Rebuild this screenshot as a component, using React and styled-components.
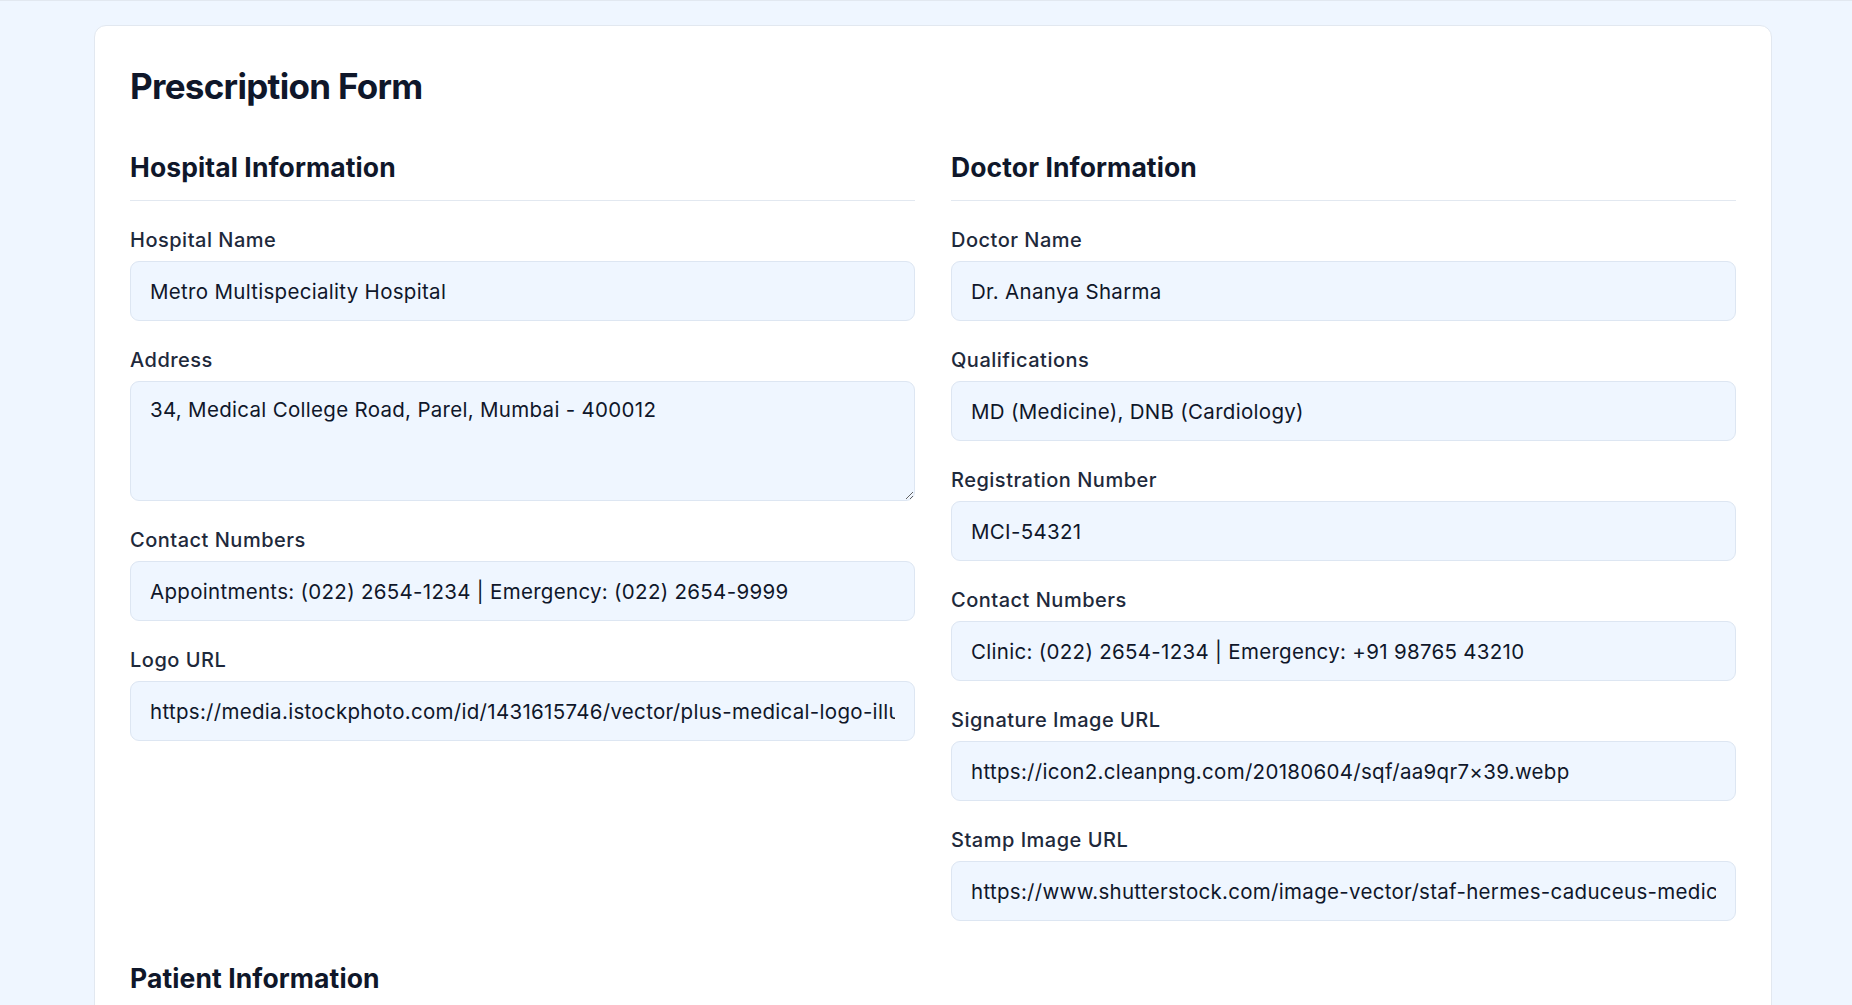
import React from "react";
import styled, { createGlobalStyle } from "styled-components";

const GlobalStyle = createGlobalStyle`
  * {
    box-sizing: border-box;
  }
  body {
    margin: 0;
    background-color: #eff6ff;
    font-family: Inter, "Noto Sans", sans-serif;
    color: #0f172a;
  }
`;

const Page = styled.div`
  border-top: 1px solid #e2e8f0;
  padding: 24px 80px 60px 94px;
  min-height: 100vh;
`;

const Card = styled.div`
  width: 1678px;
  background-color: #fff;
  border: 1px solid #e2e8f0;
  border-radius: 12px;
  padding: 40px 35px 40px;
`;

const Title = styled.h1`
  margin: 0 0 45px;
  font-size: 35px;
  line-height: 40px;
  font-weight: 700;
  letter-spacing: -0.7px;
`;

const Grid = styled.div`
  display: grid;
  grid-template-columns: 1fr 1fr;
  column-gap: 36px;
  margin-bottom: 41px;
`;

const Section = styled.section`
  display: flex;
  flex-direction: column;
`;

const SectionTitle = styled.h2`
  margin: 0 0 25px;
  padding-bottom: 17px;
  border-bottom: 1px solid #e2e8f0;
  font-size: 26.5px;
  line-height: 32px;
  font-weight: 700;
  letter-spacing: 0.1px;
`;

const Fields = styled.div`
  display: flex;
  flex-direction: column;
  gap: 25px;
`;

const Field = styled.div`
  display: flex;
  flex-direction: column;
  gap: 7px;
`;

const Label = styled.label`
  font-size: 20px;
  line-height: 28px;
  font-weight: 500;
  letter-spacing: 0.5px;
  color: #1e293b;
`;

const Input = styled.input`
  width: 100%;
  height: 60px;
  padding: 0 19px;
  border: 1px solid #dde6f2;
  border-radius: 9px;
  background-color: #eff6ff;
  font-family: inherit;
  font-size: 20.5px;
  letter-spacing: 0.3px;
  color: #0f172a;
  outline: none;
`;

const TextArea = styled.textarea`
  width: 100%;
  height: ${(props) => props.h || 120}px;
  padding: 14px 19px;
  border: 1px solid #dde6f2;
  border-radius: 9px;
  background-color: #eff6ff;
  font-family: inherit;
  font-size: 20.5px;
  letter-spacing: 0.3px;
  line-height: 28px;
  color: #0f172a;
  resize: vertical;
  outline: none;
`;

const hospital = [
  { label: "Hospital Name", value: "Metro Multispeciality Hospital" },
  { label: "Address", value: "34, Medical College Road, Parel, Mumbai - 400012", area: true },
  { label: "Contact Numbers", value: "Appointments: (022) 2654-1234 | Emergency: (022) 2654-9999" },
  { label: "Logo URL", value: "https://media.istockphoto.com/id/1431615746/vector/plus-medical-logo-illustration.jpg" },
];

const doctor = [
  { label: "Doctor Name", value: "Dr. Ananya Sharma" },
  { label: "Qualifications", value: "MD (Medicine), DNB (Cardiology)" },
  { label: "Registration Number", value: "MCI-54321" },
  { label: "Contact Numbers", value: "Clinic: (022) 2654-1234 | Emergency: +91 98765 43210" },
  { label: "Signature Image URL", value: "https://icon2.cleanpng.com/20180604/sqf/aa9qr7×39.webp" },
  { label: "Stamp Image URL", value: "https://www.shutterstock.com/image-vector/staf-hermes-caduceus-medical-logo.jpg" },
];

const patient = [
  { label: "Patient Name", value: "Rahul Verma" },
  { label: "Age", value: "42" },
];

const FormField = ({ label, value, area }) => (
  <Field>
    <Label>{label}</Label>
    {area ? (
      <TextArea defaultValue={value} />
    ) : (
      <Input type="text" defaultValue={value} />
    )}
  </Field>
);

const FormSection = ({ title, items }) => (
  <Section>
    <SectionTitle>{title}</SectionTitle>
    <Fields>
      {items.map((f) => (
        <FormField key={f.label} {...f} />
      ))}
    </Fields>
  </Section>
);

export default function App() {
  return (
    <>
      <GlobalStyle />
      <Page>
        <Card>
          <Title>Prescription Form</Title>
          <Grid>
            <FormSection title="Hospital Information" items={hospital} />
            <FormSection title="Doctor Information" items={doctor} />
          </Grid>
          <Grid>
            <FormSection title="Patient Information" items={patient} />
          </Grid>
        </Card>
      </Page>
    </>
  );
}
